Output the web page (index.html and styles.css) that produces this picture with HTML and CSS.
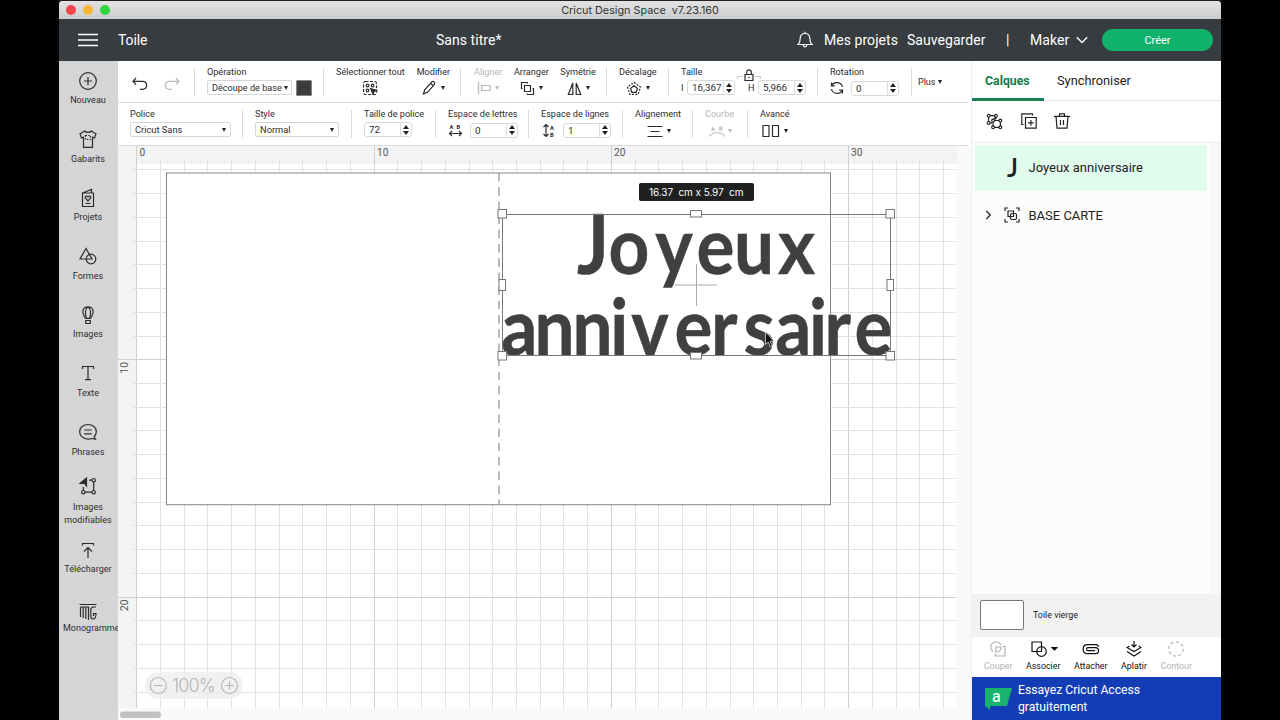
FILE: index.html
```html
<!DOCTYPE html>
<html lang="fr">
<head>
  <meta charset="UTF-8" />
  <title>Cricut Design Space</title>
  <link rel="stylesheet" href="styles.css">
</head>
<body>
  <div class="window">
    <div class="titlebar">
      <div class="lights"><i class="red"></i><i class="yellow"></i><i class="green"></i></div>
      <span class="app-name">Cricut Design Space&nbsp; v7.23.160</span>
    </div>

    <header class="header">
      <svg class="burger" width="20" height="14" viewBox="0 0 20 14"><path d="M0 1.500h20M0 7h20M0 12.500h20"/></svg>
      <span class="page">Toile</span>
      <span class="doc">Sans titre*</span>
      <svg class="bell" width="16" height="18" viewBox="0 0 16 18"><path d="M1 13.500h14c-1.600-1.500-2.200-3-2.200-6 0-3-1.900-5-4.800-5s-4.800 2-4.800 5c0 3-.6 4.500-2.200 6zM8 2.500V.8M6.200 14c.2 2.400 3.400 2.400 3.600 0"/></svg>
      <span class="projects">Mes projets</span>
      <span class="save">Sauvegarder</span>
      <span class="bar">|</span>
      <span class="machine">Maker</span>
      <svg class="chev" width="12" height="8" viewBox="0 0 12 8"><path d="M.8 1.200 6 6.500l5.200-5.300"/></svg>
      <button class="make">Créer</button>
    </header>

    <div class="body">
      <nav class="sidebar">
        <a><svg viewBox="0 0 20 20"><circle cx="10" cy="10" r="8.300"/><path d="M10 6v8M6 10h8"/></svg>Nouveau</a>
        <a><svg viewBox="0 0 20 20"><path d="M6.500 2 2 5l1.500 4 2-.8V18.300h9V8.200l2 .8L18 5l-4.500-3c-1.500 1.800-5.500 1.800-7 0z"/><path stroke-dasharray="1.5 1.300" d="M7.500 6.500h5v4h-5z"/></svg>Gabarits</a>
        <a><svg viewBox="0 0 20 20"><path d="M4.500 5h11v13.500h-11zM4.500 5l9-3.500V5M7.500 15.500h5"/><path d="M10 13 7.300 10c-.8-1.500 1.500-2.800 2.700-1 1.200-1.800 3.500-.5 2.700 1z"/></svg>Projets</a>
        <a><svg viewBox="0 0 20 20"><path d="M8 2.500 2 13h12z"/><circle cx="13" cy="13" r="4.800"/></svg>Formes</a>
        <a><svg viewBox="0 0 20 20"><path d="M7.500 13.500C6.500 11.500 4.800 10 4.800 6.800c0-6.700 10.400-6.700 10.400 0 0 3.200-1.700 4.700-2.700 6.700zM8.800 13.500C6.500 9 7 3.500 10 1.800c3 1.700 3.500 7.200 1.200 11.700M7.800 15.500v3h4.400v-3z"/></svg>Images</a>
        <a><svg viewBox="0 0 20 20"><path d="M4.500 6V3.500h11V6M10 3.500v13.200M7 16.700h6"/></svg>Texte</a>
        <a><svg viewBox="0 0 20 20"><path d="M13.500 16.500c-5.500 2-11.800-1.500-11.800-6.800 0-4.200 3.700-7.200 8.300-7.200s8.300 3 8.300 7.200c0 2-.8 3.700-2.200 5l1.400 2.500zM6.200 8h7.600M6.200 11.800h7.600"/></svg>Phrases</a>
        <a class="two"><svg viewBox="0 0 20 20"><path d="M15.700 5v8.500M5.300 10v3.500M7 15.200h7M11 3.200h3"/><circle cx="5.300" cy="15.200" r="1.700"/><circle cx="15.700" cy="15.200" r="1.700"/><circle cx="15.700" cy="3.200" r="1.700"/><path class="solid" d="M2 6.500 8.500 1v8L6.500 6.500z"/></svg>Images<br>modifiables</a>
        <a class="upload"><svg viewBox="0 0 20 20"><path d="M4.500 4.500V2.500h11v2M10 17V6.500M6 10.500l4-4 4 4"/></svg>Télécharger</a>
        <a class="mono"><svg viewBox="0 0 20 20"><path d="M1.500 2.500h17M2.500 5V15M2.500 5H10.500V18M5.200 5V16M7.800 5V17M18 5h-2.500c-1.800 0-2.700 1-2.700 3v6c0 2 .9 3 2.200 3 2 0 3-1.500 3-5.500h-2.500V14"/></svg>Monogramme</a>
      </nav>

      <main class="main">
        <div class="row row1">
          <div class="group undo">
            <svg width="18" height="14" viewBox="0 0 18 14"><path d="M5 1 2 4.300l3 3.200M2 4.300h9.500c5.500 0 5.500 8 0 8H9"/></svg>
            <svg class="off" width="18" height="14" viewBox="0 0 18 14"><path d="m13 1 3 3.300-3 3.200M16 4.300H6.500c-5.500 0-5.500 8 0 8H9"/></svg>
          </div>
          <div class="group">
            <div class="tool"><label>Opération</label>
              <div class="ctl"><span class="select op">Découpe de base<i class="tri"></i></span><b class="swatch"></b></div></div>
          </div>
          <div class="group">
            <div class="tool mid selall"><label>Sélectionner tout</label>
              <div class="ctl"><svg width="16" height="16" viewBox="0 0 16 16"><rect x="1.500" y="1.500" width="13" height="13" rx="2" stroke-dasharray="3 1.500"/><circle cx="5.500" cy="5.500" r="1.300"/><circle cx="10.500" cy="5.500" r="1.300"/><circle cx="5.500" cy="10.500" r="1.300"/><path class="solid" d="m8.500 8.500 6 2-2.500 1-1 2.500z"/></svg></div></div>
            <div class="tool mid"><label>Modifier</label>
              <div class="ctl"><svg width="15" height="16" viewBox="0 0 15 16"><path d="m1.500 14 1.200-4.200L9.800 1.900c1.400-1.200 3.800.8 2.700 2.400l-7 8zM8.600 3.300l2.700 2.400"/></svg><i class="tri"></i></div></div>
          </div>
          <div class="group wide">
            <div class="tool mid off"><label>Aligner</label>
              <div class="ctl"><svg width="14" height="14" viewBox="0 0 14 14"><path d="M1.500 1v12M4.500 4.500H13v5H4.500z"/></svg><i class="tri"></i></div></div>
            <div class="tool mid"><label>Arranger</label>
              <div class="ctl"><svg width="15" height="15" viewBox="0 0 15 15"><path d="M4.500 4.500h6v6h-6zM2.500 7.500h-1v-6h6v1M12.500 7.500h1v6h-6v-1"/></svg><i class="tri"></i></div></div>
            <div class="tool mid"><label>Symétrie</label>
              <div class="ctl"><svg width="15" height="15" viewBox="0 0 15 15"><path d="M5.800 2v11.500H1.300zM9.200 2v11.500h4.500z"/></svg><i class="tri"></i></div></div>
          </div>
          <div class="group">
            <div class="tool mid"><label>Décalage</label>
              <div class="ctl"><svg width="16" height="15" viewBox="0 0 16 15"><path d="m8 4.800 3.500 2.700-1.300 3.800H5.800L4.500 7.500z"/><path stroke-dasharray="2 1.300" d="m8 1.300 6.500 4.800-2.300 7.200H3.800L1.500 6.100z"/></svg><i class="tri"></i></div></div>
          </div>
          <div class="group">
            <div class="tool size"><label>Taille</label>
              <div class="ctl"><em>I</em><span class="num">16,367<i class="spin"></i></span>
                <em class="h">H</em><span class="num">5,966<i class="spin"></i></span></div>
              <svg class="lock" width="24" height="14" viewBox="0 0 24 14"><path class="link" d="M.5 10V7.500H6M18 7.500h5.500V10"/><path d="M8 5.500h8v6H8zM9.700 5.500V3.200c0-3 4.600-3 4.600 0v2.300M12 7.800v1.500"/></svg></div>
          </div>
          <div class="group">
            <div class="tool rot"><label>Rotation</label>
              <div class="ctl"><svg width="14" height="14" viewBox="0 0 14 14"><path d="M12.500 6C11.500.8 4 .2 1.700 4.500M1.500 1.500v3.300h3.300M1.500 8c1 5.200 8.500 5.800 10.800 1.500M12.500 12.500V9.200H9.200"/></svg><span class="num">0<i class="spin"></i></span></div></div>
          </div>
          <div class="group plus">Plus<i class="tri"></i></div>
        </div>

        <div class="row row2">
          <div class="tool group"><label>Police</label><div class="ctl"><span class="select font">Cricut Sans<i class="tri"></i></span></div></div>
          <div class="tool group"><label>Style</label><div class="ctl"><span class="select style">Normal<i class="tri"></i></span></div></div>
          <div class="tool group"><label>Taille de police</label><div class="ctl"><span class="num">72<i class="spin"></i></span></div></div>
          <div class="tool group ls"><label>Espace de lettres</label><div class="ctl"><svg width="15" height="15" viewBox="0 0 15 15"><text x="1.500" y="6">A</text><text x="8.500" y="6">B</text><path d="M1.500 10.500h12M4 8l-2.500 2.500L4 13M11 8l2.500 2.500L11 13"/></svg><span class="num">0<i class="spin"></i></span></div></div>
          <div class="tool group ls"><label>Espace de lignes</label><div class="ctl"><svg width="15" height="15" viewBox="0 0 15 15"><text x="9" y="6.500">A</text><text x="9" y="14">B</text><path d="M5 1.500v12M2.500 4 5 1.500 7.500 4M2.500 11 5 13.500 7.500 11"/></svg><span class="num">1<i class="spin"></i></span></div></div>
          <div class="tool group mid"><label>Alignement</label><div class="ctl"><svg width="16" height="14" viewBox="0 0 16 14"><path d="M.5 2.500h15M3.500 7.500h9M.5 12.500h15"/></svg><i class="tri"></i></div></div>
          <div class="tool group mid off"><label>Courbe</label><div class="ctl"><svg width="18" height="14" viewBox="0 0 18 14"><text transform="translate(3.500 7.500) rotate(-14)">A</text><text transform="translate(10.500 6) rotate(14)">B</text><path d="M1 12.500c4-5 12-5 16 0"/></svg><i class="tri"></i></div></div>
          <div class="tool group mid"><label>Avancé</label><div class="ctl"><svg width="18" height="14" viewBox="0 0 18 14"><path d="M1 1.500h6v11H1zM10.500 1.500h6v11h-6z"/></svg><i class="tri"></i></div></div>
        </div>

        <svg class="canvas" width="853" height="574" viewBox="118 146 853 574">
          <rect class="outer" x="118" y="145" width="853" height="575"/>
          <rect class="ruler" x="118" y="145" width="839" height="563"/>
          <rect class="mat" x="137" y="164" width="819.500" height="544"/>
          <g id="grid"></g>
          <g class="ruler-text">
            <text x="139.500" y="155.800">0</text><text x="377" y="155.800">10</text><text x="614" y="155.800">20</text><text x="851" y="155.800">30</text>
            <text transform="translate(127.500 373.500) rotate(-90)">10</text><text transform="translate(127.500 611) rotate(-90)">20</text>
          </g>
          <rect class="card" x="166.500" y="173" width="664" height="331.700"/>
          <path class="fold" d="M499 173v331"/>
          <g class="greeting" transform="scale(.9 1)">
            <text y="274.500" x="641 676 728 774 815.500 864.500"><tspan class="cap">J</tspan>oyeux</text>
            <text y="355.500" x="557 594 636 678 701.500 749.500 790 826 861.500 899 916 949.500">anniversaire</text>
          </g>
          <path class="cross" d="M696.500 264v42M675 285h42"/>
          <g class="selection">
            <rect class="frame" x="502.500" y="214.500" width="388" height="141"/>
            <rect x="498" y="209.500" width="8.500" height="8.500"/><rect x="886" y="209.500" width="8.500" height="8.500"/>
            <rect x="498" y="351.500" width="8.500" height="8.500"/><rect x="886" y="351.500" width="8.500" height="8.500"/>
            <rect x="690.500" y="210.500" width="11" height="6.500"/><rect x="690.500" y="352.500" width="11" height="6.500"/>
            <rect x="499" y="279.500" width="6.500" height="11"/><rect x="887" y="279.500" width="6.500" height="11"/>
          </g>
          <rect class="tip" x="639" y="183" width="115" height="18" rx="2"/>
          <text class="tip-text" x="649" y="195.500" textLength="94.500">16.37&#160; cm x 5.97&#160; cm</text>
          <rect class="pill" x="145" y="672" width="98" height="27" rx="13.500"/>
          <g class="zoom"><circle cx="158.300" cy="685.500" r="8"/><circle cx="229.500" cy="685.500" r="8"/><path d="M154 685.500h8.600M225.200 685.500h8.600M229.500 681.200v8.600"/><text x="172" y="692" textLength="43.500">100%</text></g>
          <rect class="thumb" x="120" y="711.500" width="41" height="6.500" rx="3.200"/>
          <path class="pointer" d="M765.500 332v12.500l2.700-2.500 2 4.500 2-.9-2-4.300h3.800z"/>
        </svg>
      </main>

      <aside class="panel">
        <div class="tabs"><span class="active">Calques</span><span>Synchroniser</span></div>
        <div class="layer-tools">
          <svg width="17" height="17" viewBox="0 0 18 18"><path d="M4 2.800h5M2.800 4.500v5M10.500 4v3M4 10.500h2.500M9 8h5M7.500 9.500v4.500M15.200 9.500v4.500M9 15.200h5M10.500 4 8 7"/><circle cx="2.800" cy="2.800" r="1.500"/><circle cx="10.500" cy="2.800" r="1.500"/><circle cx="2.800" cy="10.500" r="1.500"/><circle cx="7.500" cy="8" r="1.500"/><circle cx="15.200" cy="8" r="1.500"/><circle cx="7.500" cy="15.200" r="1.500"/><circle cx="15.200" cy="15.200" r="1.500"/></svg>
          <svg width="16" height="16" viewBox="0 0 16 16"><path d="M4.500 4.500h10.700v10.700H4.500zM2.500 11.500H.8V.8h10.700v1.700M9.900 7v5.700M7 9.900h5.700"/></svg>
          <svg width="16" height="16" viewBox="0 0 16 16"><path d="M0 3.300h16M2 3.300l1 11.900h10l1-11.900M5.500 3V.8h5V3M6.500 7v5M9.500 7v5"/></svg>
        </div>
        <div class="layers">
          <div class="layer selected"><b>J</b>Joyeux anniversaire</div>
          <div class="layer base">
            <svg width="7" height="10" viewBox="0 0 7 10"><path d="m1.300 1 4 4-4 4"/></svg>
            <svg width="16" height="16" viewBox="0 0 16 16"><path d="M1 4V1h3M12 1h3v3M15 12v3h-3M4 15H1v-3M4 4h5.500v5.500H4z"/><rect x="6.500" y="6.500" width="6" height="6" rx="1.500"/></svg>
            BASE CARTE
          </div>
        </div>
        <div class="blank"><i></i>Toile vierge</div>
        <div class="actions">
          <span class="off"><svg width="16" height="16" viewBox="0 0 16 16"><path d="M3 10.500C-1.500 6.500 1.500 1 6 1c2.500 0 4.300 1.500 4.800 3M12.500 5.500H15V15H5.500v-2.500M6 6h5c.2 3-1.500 4.800-5 5z"/></svg>Couper</span>
          <span><svg class="weld" width="27" height="16" viewBox="0 0 27 16"><path d="M1 1h9.500v9.500H1z"/><circle cx="10.500" cy="10.500" r="4.800"/><path class="solid" d="M21 6.500h5l-2.500 2.500z"/></svg>Associer</span>
          <span><svg width="18" height="16" viewBox="0 0 18 16"><path d="M13 9.700H6c-2 0-2-3 0-3h7.300c4.300 0 4.300 6 0 6H5.500c-5.800 0-5.800-9 0-9h8.500c1.500 0 2.300 1 2.700 2"/></svg>Attacher</span>
          <span><svg width="16" height="16" viewBox="0 0 16 16"><path d="M8 0v6M5.500 3.500 8 6l2.500-2.500M3.500 5 1 6.500l7 4 7-4L12.500 5M1 10.500l7 4.500 7-4.500"/></svg>Aplatir</span>
          <span class="off"><svg width="16" height="16" viewBox="0 0 16 16"><circle cx="8" cy="8" r="7.200" stroke-dasharray="3.200 2.400"/></svg>Contour</span>
        </div>
        <div class="banner">
          <svg width="27" height="24" viewBox="0 0 27 24"><path class="flag" d="M0 1h27l-5 18H5v4l-5-4z"/><text x="7" y="14.500">a</text></svg>
          <p>Essayez Cricut Access<br>gratuitement</p>
        </div>
      </aside>
    </div>
  </div>

  <script>
    // canvas grid, one line per centimetre
    const grid = document.getElementById("grid");
    const step = 23.73;

    function addLine(d, major) {
      const path = document.createElementNS("http://www.w3.org/2000/svg", "path");
      path.setAttribute("d", d);
      path.setAttribute("class", major ? "major" : "minor");
      grid.appendChild(path);
    }

    for (let i = 0; i <= 34; i++) {
      const x = Math.floor(136.8 + i * step) + 0.5;
      const major = i % 10 === 0;
      addLine(`M${x} ${major ? 145 : 160}V708`, major);
    }
    for (let i = 2; i <= 24; i++) {
      const y = Math.floor(122.5 + i * step) + 0.5;
      const major = i % 10 === 0;
      addLine(`M${major ? 118 : 133} ${y}H956`, major);
    }
  </script>
</body>
</html>
```

FILE: styles.css
```css
* { box-sizing: border-box; }
html, body { margin: 0; padding: 0; }
body {
  width: 1280px; height: 720px;
  overflow: hidden;
  background: #000;
  font-family: Roboto, 'Liberation Sans', sans-serif;
  color: #2c2c2e;
}
svg { display: block; flex: none; fill: none; stroke: currentColor; stroke-width: 1.2; }
svg text { fill: currentColor; stroke: none; }
.solid { fill: currentColor; }
i, em { font-style: normal; }

.window {
  width: 1162px; height: 720px; margin-left: 59px;
  border-top: 1px solid #211e24;
  display: flex; flex-direction: column;
}
.titlebar {
  height: 18px; flex: none;
  display: grid; grid-template-columns: 1fr auto 1fr; align-items: center;
  background: linear-gradient(#e2e2e2, #cdcdcd);
  border-radius: 3px 3px 0 0;
}
.lights { display: flex; gap: 7px; padding-left: 6.500px; }
.lights i { width: 10px; height: 10px; border-radius: 50%; }
.red { background: #f0464b; }
.yellow { background: #f7b62f; }
.green { background: #2fd63d; }
.app-name { font-family: Inter, sans-serif; font-size: 10.800px; color: #333; }

.header {
  height: 42px; flex: none;
  display: flex; align-items: center;
  background: #373c40; color: #fff;
  font-size: 14px; padding: 0 8px 0 19px;
  white-space: nowrap;
}
.header svg { stroke-width: 1.500; }
.header .bell { stroke-width: 1.200; }
.header .chev { stroke-width: 1.300; }
.page { width: 318px; padding-left: 20px; letter-spacing: -.1px; }
.doc { width: 381px; padding-left: 20px; }
.projects { width: 94px; padding-left: 11px; }
.doc, .projects, .save, .machine { letter-spacing: .05px; }
.save { width: 80px; }
.bar { width: 4px; margin-left: 19px; }
.machine { width: 38px; margin-left: 20px; }
.chev { margin-left: 8px; }
.make {
  margin-left: auto; width: 111px; height: 22px;
  border: 0; border-radius: 11px;
  background: #10b26b; color: #fff;
  font: 11px Roboto, sans-serif;
}

.body { flex: 1; display: flex; min-height: 0; }

.sidebar {
  width: 59px; flex: none;
  display: flex; flex-direction: column;
  background: #d5d5d6; padding: 9.500px 1px 0 0;
}
.sidebar a {
  height: 58.600px; flex: none;
  display: flex; flex-direction: column; align-items: center;
  font-size: 9px; line-height: 13px; text-align: center;
  letter-spacing: .03px; white-space: nowrap;
}
.sidebar svg { width: 20px; height: 20px; margin-bottom: 3.500px; }
.sidebar .two { height: 60px; margin-top: -4px; }
.sidebar .two svg { margin-bottom: 4.500px; }
.sidebar .upload { height: 60px; margin-top: 4px; }
.sidebar .upload svg { margin-bottom: 2px; }
.sidebar .mono { margin: 1px -1px 0 4px; align-items: flex-start; overflow: hidden; letter-spacing: 0; }
.sidebar .mono svg { margin: 0 0 0 15px; }

.main { width: 853px; flex: none; background: #fff; }
.row { display: grid; width: 850px; border-bottom: 1px solid #ddd; white-space: nowrap; }
.row1 { height: 42px; padding-top: 7px; grid-template-columns: 76px 129px 137px 146px 62px 149px 94px 1fr; }
.row2 { height: 43px; padding-top: 7px; grid-template-columns: 124px 109px 84px 93px 94px 70px 55px 1fr; }
.group { height: 28px; display: flex; border-left: 1px solid #dcdcdc; padding-left: 12px; }
.row .group:first-child { border-left: 0; }
.undo { align-items: center; gap: 14px; padding: 4px 0 0 13px; }
.undo .off { color: #bbb; }
.tool { display: flex; flex-direction: column; align-items: flex-start; font-size: 9.100px; position: relative; }
.tool label { line-height: 10px; height: 10px; margin-top: -1px; }
.row2 .tool { padding-left: 12px; }
.ctl { height: 17px; margin-top: 2px; display: flex; align-items: center; }
.mid { align-items: center; }
.mid .ctl { gap: 4px; margin-top: 3px; }
.selall { margin-right: 12px; }
.wide { gap: 11.500px; padding-left: 13px; }
.off { color: #b8b8b8; }
.row2 .mid { align-items: flex-start; }
.row2 .mid .ctl { padding-left: 12px; height: 20px; margin-top: 4px; }
.row2 .mid:nth-last-child(-n+2) .ctl { padding-left: 2px; }
.row2 .mid:nth-last-child(2) .ctl { padding-left: 3px; gap: 2px; }
.row2 .ls .ctl { margin-top: 3px; }
.tri { border: 2.800px solid transparent; border-top: 4.800px solid #222; border-bottom: 0; }
.off .tri { border-top-color: #b8b8b8; }
.select {
  height: 15px; display: flex; align-items: center; justify-content: space-between;
  border: 1px solid #d6d6d6; border-radius: 2px;
  padding: 0 4px; font-size: 9.300px;
}
.op { width: 85px; padding-right: 3px; font-size: 9.100px; }
.font { width: 101px; }
.style { width: 84px; }
.swatch { width: 16px; height: 16px; margin-left: 4px; background: #3d3d3f; border: 1px solid #888; border-radius: 1px; }
.num {
  width: 48px; height: 15px; padding-left: 4px;
  display: flex; align-items: center; justify-content: space-between;
  border: 1px solid #d9d9d9; border-radius: 3px;
  font-size: 9.800px;
}
.spin {
  width: 11px; height: 13px; border-left: 1px solid #ddd;
  display: flex; flex-direction: column; align-items: center; justify-content: center; gap: 2px;
}
.spin::before, .spin::after { content: ""; border: 3px solid transparent; }
.spin::before { border-bottom: 4px solid #222; border-top: 0; }
.spin::after { border-top: 4px solid #222; border-bottom: 0; }
.size .ctl em { width: 6px; }
.size .ctl .h { width: 10px; margin-left: 13px; }
.lock { position: absolute; left: 56px; top: 1px; }
.link { stroke: #ccc; }
.rot .ctl { margin-top: 3px; }
.rot .num { margin-left: 7px; }
.ls .num { margin-left: 7px; }
.ls text, .row2 .off text { font-size: 5.800px; font-weight: 700; }
.plus { align-items: center; padding-left: 6px; font-size: 9px; gap: 3px; }

.canvas { stroke: none; }
.outer { fill: #f9f9f9; }
.ruler { fill: #f3f3f3; }
.mat { fill: #fff; }
.minor { stroke: #e2e2e2; stroke-width: 1; }
.major { stroke: #cfcfcf; stroke-width: 1; }
.ruler-text { font-size: 10.200px; color: #555; }
.card { fill: #fff; stroke: #858585; stroke-width: 1; }
.fold { stroke: #8c8c8c; stroke-width: 1.200; stroke-dasharray: 8.500 5.700; }
.greeting { font: 700 79px Lato, sans-serif; color: #404042; }
.greeting text { stroke: #404042; stroke-width: .5; }
.cap { font-size: 83px; }
.cross { stroke: #aaa; stroke-width: 1; }
.selection rect { fill: #fff; stroke: #777; stroke-width: 1; }
.selection .frame { fill: none; }
.tip { fill: #202021; }
.tip-text { fill: #fff; font-family: Inter, sans-serif; font-size: 10px; }
.pill { fill: #eee; fill-opacity: .8; }
.zoom { color: #b5b5b5; stroke: #b5b5b5; stroke-width: 1.200; font: 300 18px Inter, sans-serif; }
.thumb { fill: #c1c1c1; }
.pointer { fill: #111; stroke: #eee; stroke-width: .7; }

.panel {
  width: 250px; flex: none; background: #fff;
  border-left: 1px solid #eee;
  display: flex; flex-direction: column; color: #1f2224;
}
.tabs { height: 40px; display: flex; border-bottom: 1px solid #e8e8e8; font-size: 12.800px; line-height: 40px; }
.tabs span { padding-left: 13px; }
.tabs .active { width: 72px; height: 40px; color: #137a4b; font-weight: 700; font-size: 12.300px; border-bottom: 3px solid #177f51; }
.layer-tools { height: 42px; display: flex; align-items: center; gap: 17.500px; padding: 0 0 1px 14px; border-bottom: 1px solid #eee; }
.layers { height: 451px; background: #fcfcfc; padding: 2px 3px; border-right: 11px solid #f8f8f8; }
.layer { display: flex; align-items: center; font-size: 13px; }
.selected { height: 46px; width: 232px; background: #e1fbed; padding: 0 0 2px 32px; }
.selected b { font: 600 26px Lato, sans-serif; width: 21.500px; }
.base { height: 48px; padding-left: 10px; }
.base svg:nth-child(2) { margin: 0 8.500px 0 12px; }
.blank { height: 43px; background: #f2f2f2; display: flex; align-items: center; padding: 0 0 1px 8px; font-size: 8.900px; }
.blank i { width: 44px; height: 30px; border: 1px solid #777; border-radius: 2px; background: #fff; margin-right: 9px; }
.actions { height: 40px; display: flex; padding: 4px 0 0 12px; gap: 13.500px; font-size: 8.900px; }
.actions span { display: flex; flex-direction: column; align-items: center; gap: 4px; color: #111; }
.actions .off { color: #b3b3b3; }
.weld { margin-left: 2px; }
.banner { flex: 1; background: #133db5; color: #fff; display: flex; padding-left: 13px; }
.banner svg { margin-top: 10px; stroke: none; }
.flag { fill: #18b36d; }
.banner text { font-size: 16px; }
.banner p { margin: 5px 0 0 6px; font-size: 12.200px; line-height: 16.500px; }
```
